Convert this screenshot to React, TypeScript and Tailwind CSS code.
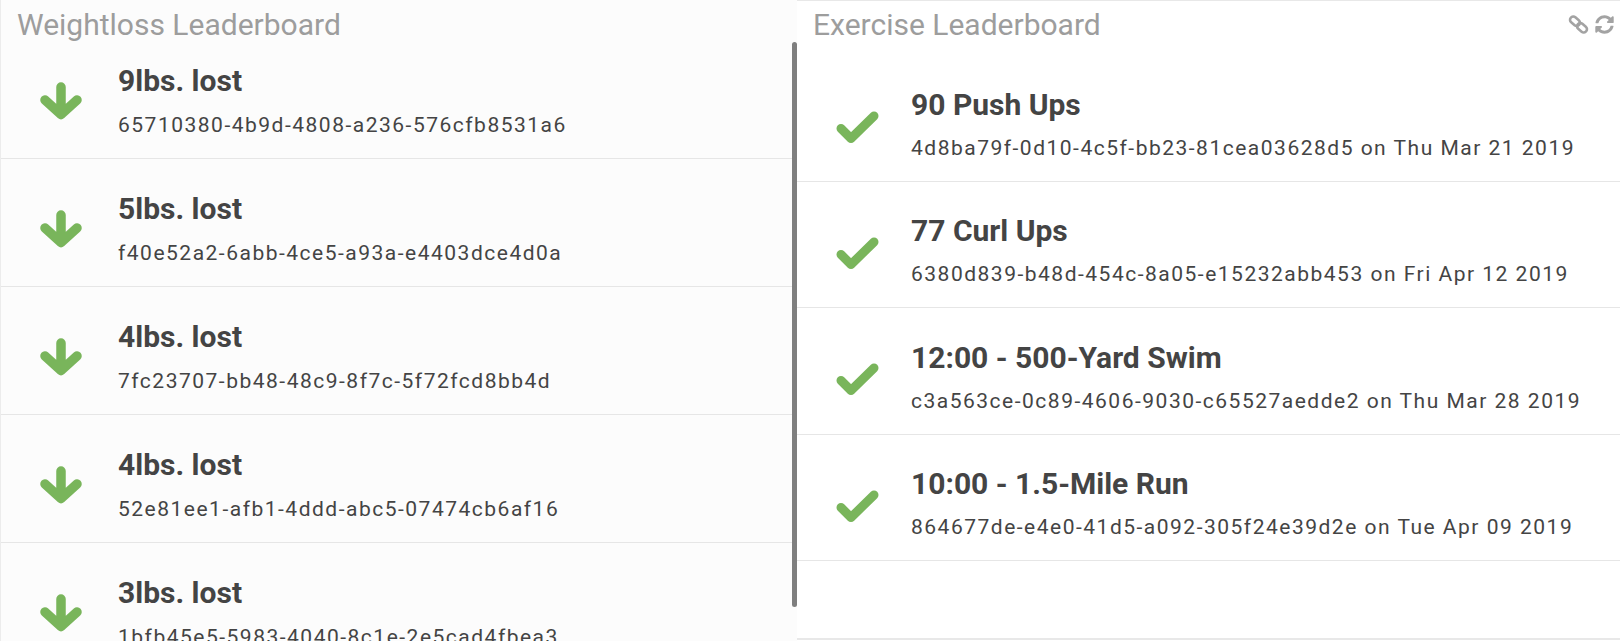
import { FaSyncAlt } from "react-icons/fa";

const WEIGHTLOSS = [
  { lost: 9, id: "65710380-4b9d-4808-a236-576cfb8531a6" },
  { lost: 5, id: "f40e52a2-6abb-4ce5-a93a-e4403dce4d0a" },
  { lost: 4, id: "7fc23707-bb48-48c9-8f7c-5f72fcd8bb4d" },
  { lost: 4, id: "52e81ee1-afb1-4ddd-abc5-07474cb6af16" },
  { lost: 3, id: "1bfb45e5-5983-4040-8c1e-2e5cad4fbea3" },
];

const EXERCISE = [
  { title: "90 Push Ups", id: "4d8ba79f-0d10-4c5f-bb23-81cea03628d5", date: "Thu Mar 21 2019", h: "h-[126px]" },
  { title: "77 Curl Ups", id: "6380d839-b48d-454c-8a05-e15232abb453", date: "Fri Apr 12 2019", h: "h-[126px]" },
  { title: "12:00 - 500-Yard Swim", id: "c3a563ce-0c89-4606-9030-c65527aedde2", date: "Thu Mar 28 2019", h: "h-[127px]" },
  { title: "10:00 - 1.5-Mile Run", id: "864677de-e4e0-41d5-a092-305f24e39d2e", date: "Tue Apr 09 2019", h: "h-[126px]" },
];

function ArrowDown() {
  return (
    <svg width="42" height="38" viewBox="0 0 42 38" fill="none">
      <path
        d="M21 5 L21 30 M5 18 L21 32.5 L37 18"
        stroke="#79b55b"
        strokeWidth={9.5}
        strokeLinecap="round"
        strokeLinejoin="round"
      />
    </svg>
  );
}

function Check() {
  return (
    <svg width="43" height="33" viewBox="0 0 43 33" fill="none">
      <path
        d="M5 17.5 L15 27.5 L38 5"
        stroke="#79b55b"
        strokeWidth={9}
        strokeLinecap="round"
        strokeLinejoin="round"
      />
    </svg>
  );
}

function LinkIcon() {
  return (
    <svg width="21" height="19" viewBox="0 0 21 19" fill="none">
      <rect x="1.5" y="3" width="11" height="6.5" rx="3.25" transform="rotate(40 7 6.25)" stroke="#a3a3a3" strokeWidth={2.6} />
      <rect x="8.5" y="9.5" width="11" height="6.5" rx="3.25" transform="rotate(40 14 12.75)" stroke="#a3a3a3" strokeWidth={2.6} />
    </svg>
  );
}

export default function App() {
  return (
    <div className="flex w-full h-[641px] bg-white overflow-hidden font-['Roboto',sans-serif]">
      {/* Weightloss */}
      <div className="relative flex flex-col w-[797px] shrink-0 h-full bg-[#fcfcfc] border-l border-[#ececec]">
        <div className="h-[42px] shrink-0 pl-[16px] pt-[10px]">
          <h2 className="text-[30px] leading-[30px] font-normal text-[#9d9d9d]">Weightloss Leaderboard</h2>
        </div>
        <div className="flex-1 overflow-hidden">
          <div className="-mt-[11px]">
            {WEIGHTLOSS.map((w, i) => (
              <div key={i} className="flex items-center h-[128px] pt-[13px] pl-[39px] border-b border-[#e6e6e6]">
                <div className="w-[42px] flex justify-center">
                  <ArrowDown />
                </div>
                <div className="ml-[36px] flex flex-col">
                  <span className="text-[30px] leading-[34px] font-bold text-[#444]">{w.lost}lbs. lost</span>
                  <span className="mt-[14px] text-[21px] leading-[26px] tracking-[1.5px] text-[#444]">{w.id}</span>
                </div>
              </div>
            ))}
          </div>
        </div>
        {/* scrollbar thumb */}
        <div className="absolute left-[791px] top-[42px] w-[5px] h-[565px] rounded-full bg-[#7f7f7f]" />
      </div>

      {/* Exercise */}
      <div className="flex flex-col flex-1 h-[640px] bg-white border-t border-b-2 border-[#e8e8e8]">
        <div className="h-[55px] shrink-0 flex items-start justify-between pl-[16px] pr-[6px] pt-[9px]">
          <h2 className="text-[30px] leading-[30px] font-normal text-[#9d9d9d]">Exercise Leaderboard</h2>
          <div className="flex items-center gap-[6px] pt-[5px]">
            <LinkIcon />
            <FaSyncAlt className="text-[#a3a3a3]" size={19} />
          </div>
        </div>
        {EXERCISE.map((e, i) => (
          <div key={i} className={`flex items-center ${e.h} pt-[12px] pl-[39px] border-b border-[#e6e6e6]`}>
            <div className="w-[43px] mt-[5px] flex justify-center">
              <Check />
            </div>
            <div className="ml-[32px] flex flex-col">
              <span className="text-[30px] leading-[34px] font-bold text-[#444]">{e.title}</span>
              <span className="mt-[13px] text-[21px] leading-[26px] tracking-[1.5px] text-[#444]">
                {e.id} on {e.date}
              </span>
            </div>
          </div>
        ))}
      </div>
    </div>
  );
}
